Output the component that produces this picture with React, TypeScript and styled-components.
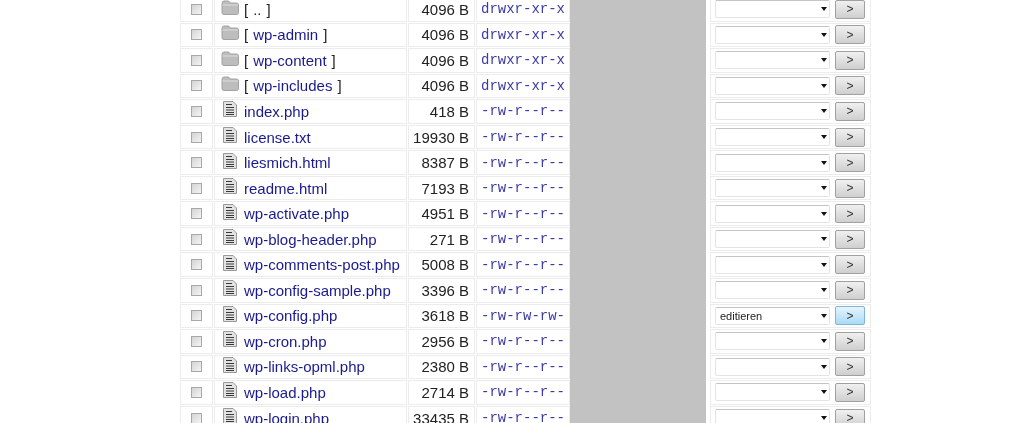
import React from "react"
import styled, { createGlobalStyle } from "styled-components"

type FileRow = {
  name: string
  size: string
  perms: string
  isDir?: boolean
  action?: string
}

const rows: FileRow[] = [
  { name: "..", size: "4096 B", perms: "drwxr-xr-x", isDir: true },
  { name: "wp-admin", size: "4096 B", perms: "drwxr-xr-x", isDir: true },
  { name: "wp-content", size: "4096 B", perms: "drwxr-xr-x", isDir: true },
  { name: "wp-includes", size: "4096 B", perms: "drwxr-xr-x", isDir: true },
  { name: "index.php", size: "418 B", perms: "-rw-r--r--" },
  { name: "license.txt", size: "19930 B", perms: "-rw-r--r--" },
  { name: "liesmich.html", size: "8387 B", perms: "-rw-r--r--" },
  { name: "readme.html", size: "7193 B", perms: "-rw-r--r--" },
  { name: "wp-activate.php", size: "4951 B", perms: "-rw-r--r--" },
  { name: "wp-blog-header.php", size: "271 B", perms: "-rw-r--r--" },
  { name: "wp-comments-post.php", size: "5008 B", perms: "-rw-r--r--" },
  { name: "wp-config-sample.php", size: "3396 B", perms: "-rw-r--r--" },
  { name: "wp-config.php", size: "3618 B", perms: "-rw-rw-rw-", action: "editieren" },
  { name: "wp-cron.php", size: "2956 B", perms: "-rw-r--r--" },
  { name: "wp-links-opml.php", size: "2380 B", perms: "-rw-r--r--" },
  { name: "wp-load.php", size: "2714 B", perms: "-rw-r--r--" },
  { name: "wp-login.php", size: "33435 B", perms: "-rw-r--r--" },
]

const FolderIcon = () => (
  <svg width="18" height="15" viewBox="0 0 18 15">
    <path d="M1 3.5 Q1 1 3 1 H7 Q8.5 1 9 3 H15.5 Q17.5 3 17.5 5 V12.5 Q17.5 14.5 15.5 14.5 H3 Q1 14.5 1 12.5 Z" fill="#bdbdbd" stroke="#a2a2a2" />
    <path d="M1.5 5 H17" stroke="#dedede" />
  </svg>
)

const DocIcon = () => (
  <svg width="14" height="16" viewBox="0 0 14 16">
    <path d="M0.5 0.5 H10 L13.5 4 V15.5 H0.5 Z" fill="#e2e2e2" stroke="#999" />
    <path d="M3 3.5 H9 M3 6.5 H11 M3 9 H11 M3 11.5 H11 M3 13.5 H11" stroke="#3a3a3a" strokeWidth="1" />
  </svg>
)

function App() {
  return (
    <>
      <GlobalStyle />
      <Table>
        {rows.map((row) => (
          <Row key={row.name}>
            <CheckCell>
              <CheckBox />
            </CheckCell>
            <NameCell>
              <IconSlot isDir={row.isDir}>{row.isDir ? <FolderIcon /> : <DocIcon />}</IconSlot>
              {row.isDir ? (
                <DirLabel>
                  [<FileLink>{row.name}</FileLink>]
                </DirLabel>
              ) : (
                <FileLink>{row.name}</FileLink>
              )}
            </NameCell>
            <SizeCell>{row.size}</SizeCell>
            <PermCell>{row.perms}</PermCell>
            <GrayCell />
            <ActionCell>
              <SelectWrap>
                <ActionSelect value={row.action ?? ""} onChange={() => undefined}>
                  <option value=""></option>
                  <option value="editieren">editieren</option>
                </ActionSelect>
              </SelectWrap>
              <GoButton active={!!row.action}>&gt;</GoButton>
            </ActionCell>
          </Row>
        ))}
      </Table>
    </>
  )
}

export default App

const GlobalStyle = createGlobalStyle`
  html, body {
    margin: 0;
    height: 423px;
    overflow: hidden;
    background: #fff;
  }
  body {
    font-family: "Liberation Sans", Arial, sans-serif;
  }
`
const Table = styled.div`
  width: 692px;
  margin: -3px 0 0 180px;
  filter: blur(0.45px);
`
const Row = styled.div`
  display: grid;
  grid-template-columns: 33px 193px 67px 94px 138px 161px;
  column-gap: 1px;
  height: 25.56px;
  box-sizing: border-box;
  padding-bottom: 1px;
`
const Cell = styled.div`
  box-sizing: border-box;
  border: 1px solid #ececec;
  background: #fff;
  display: flex;
  align-items: center;
  min-width: 0;
`
const CheckCell = styled(Cell)`
  justify-content: center;
`
const CheckBox = styled.span`
  box-sizing: border-box;
  width: 11px;
  height: 11px;
  border: 1px solid #a8a8a8;
  background: linear-gradient(135deg, #d4d4d4, #f4f4f4);
`
const NameCell = styled(Cell)`
  padding-left: 6px;
  font-size: 15px;
  color: #222;
  white-space: nowrap;
`
const IconSlot = styled.span<{ isDir?: boolean }>`
  display: inline-flex;
  width: 23px;
  flex: none;
  padding-left: ${({ isDir }) => (isDir ? "0" : "2px")};
  margin-top: -4px;
  box-sizing: border-box;
`
const DirLabel = styled.span`
  color: #222;
`
const FileLink = styled.span`
  color: #1a1a8e;
  ${DirLabel} & {
    margin: 0 5px;
  }
`
const SizeCell = styled(Cell)`
  justify-content: flex-end;
  padding-right: 5px;
  font-size: 15px;
  color: #222;
`
const PermCell = styled(Cell)`
  padding-left: 4px;
  font-family: "Liberation Mono", "Courier New", monospace;
  font-size: 14px;
  color: #3a3aa8;
`
const GrayCell = styled.div`
  background: #c2c2c2;
  margin: 0 3px 0 -1px;
  height: calc(100% + 1px);
`
const ActionCell = styled(Cell)`
  padding-left: 4px;
  gap: 5px;
`
const SelectWrap = styled.span`
  position: relative;
  display: block;
  width: 115px;
  height: 18px;
  &::after {
    content: "";
    position: absolute;
    right: 3px;
    top: 7px;
    border-left: 3px solid transparent;
    border-right: 3px solid transparent;
    border-top: 4px solid #111;
    pointer-events: none;
  }
`
const ActionSelect = styled.select`
  appearance: none;
  display: block;
  box-sizing: border-box;
  width: 100%;
  height: 100%;
  padding: 0 0 0 4px;
  border: 1px solid #e4e4e4;
  border-top-color: #c4c4c4;
  border-radius: 2px;
  background: #fff;
  font-family: "Liberation Sans", Arial, sans-serif;
  font-size: 11px;
  color: #222;
  outline: none;
`
const GoButton = styled.button<{ active: boolean }>`
  box-sizing: border-box;
  width: 30px;
  height: 19px;
  padding: 0;
  border: 1px solid ${({ active }) => (active ? "#7fb5da" : "#a0a0a0")};
  border-radius: 2px;
  background: ${({ active }) =>
    active
      ? "linear-gradient(#e6f4fc, #a9dbf6)"
      : "linear-gradient(#f0f0f0, #cfcfcf)"};
  font-family: "Liberation Sans", Arial, sans-serif;
  font-size: 12px;
  color: #333;
`
